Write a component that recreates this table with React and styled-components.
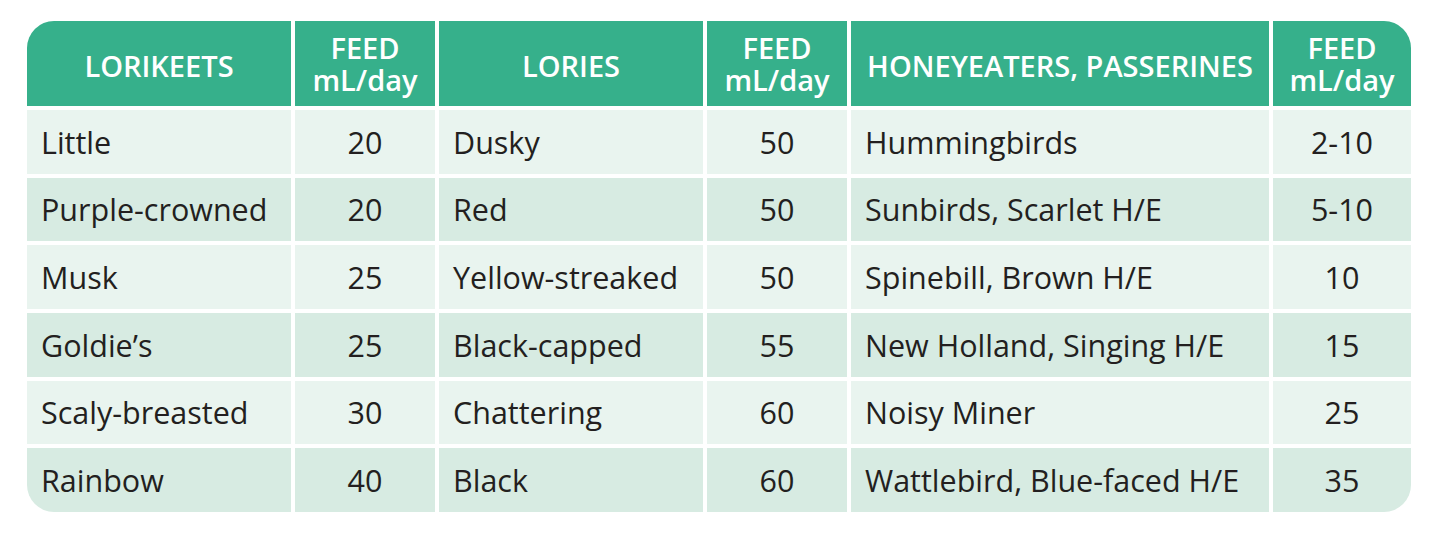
import React from 'react';
import styled, {createGlobalStyle} from "styled-components";

const GlobalStyle = createGlobalStyle`
    html, body {
        margin: 0;
        padding: 0;
        background: #ffffff;
    }
    body {
        font-family: "Open Sans", "Noto Sans", sans-serif;
    }
`

const Page = styled.div`
    width: 1445px;
    height: 535px;
    padding: 21px 0 0 27px;
    box-sizing: border-box;
    background: #ffffff;
`

// six column grid, white gaps act as the cell borders
const FeedTable = styled.div`
    display: grid;
    grid-template-columns: 264px 140px 264px 140px 418px 138px;
    grid-template-rows: 85px repeat(6, 1fr);
    column-gap: 4px;
    row-gap: 4px;
    width: 1384px;
    height: 491px;
    border-radius: 27px;
    overflow: hidden;
`;

const HeadCell = styled.div`
    display: flex;
    align-items: center;
    justify-content: center;
    text-align: center;
    background-color: #36b08b;
    color: #ffffff;
    font-size: 29px;
    font-weight: 600;
    line-height: 32px;
    white-space: nowrap;
    padding-top: ${(props) => (props.stacked ? "1px" : "4px")};
`;

const Cell = styled.div`
    display: flex;
    align-items: center;
    justify-content: ${(props) => (props.num ? "center" : "flex-start")};
    padding: 0 ${(props) => (props.num ? "0" : "14px")};
    background-color: ${(props) => (props.shade ? "#d7ebe2" : "#e9f4ef")};
    color: #231f20;
    font-size: 30.5px;
    white-space: nowrap;
`;

const headers = [
    {label: "LORIKEETS"},
    {label: "FEED", sub: "mL/day"},
    {label: "LORIES"},
    {label: "FEED", sub: "mL/day"},
    {label: "HONEYEATERS, PASSERINES"},
    {label: "FEED", sub: "mL/day"},
];

const rows = [
    ["Little", "20", "Dusky", "50", "Hummingbirds", "2-10"],
    ["Purple-crowned", "20", "Red", "50", "Sunbirds, Scarlet H/E", "5-10"],
    ["Musk", "25", "Yellow-streaked", "50", "Spinebill, Brown H/E", "10"],
    ["Goldie’s", "25", "Black-capped", "55", "New Holland, Singing H/E", "15"],
    ["Scaly-breasted", "30", "Chattering", "60", "Noisy Miner", "25"],
    ["Rainbow", "40", "Black", "60", "Wattlebird, Blue-faced H/E", "35"],
];

function App() {
    return (
        <Page>
            <GlobalStyle/>
            <FeedTable>
                {headers.map((h, i) => (
                    <HeadCell key={i} stacked={!!h.sub}>
                        {h.sub ? <span>{h.label}<br/>{h.sub}</span> : h.label}
                    </HeadCell>
                ))}
                {rows.map((row, r) =>
                    row.map((value, c) => (
                        <Cell key={`${r}-${c}`} num={c % 2 === 1} shade={r % 2 === 1}>
                            {value}
                        </Cell>
                    ))
                )}
            </FeedTable>
        </Page>
    )
}

export default App;
